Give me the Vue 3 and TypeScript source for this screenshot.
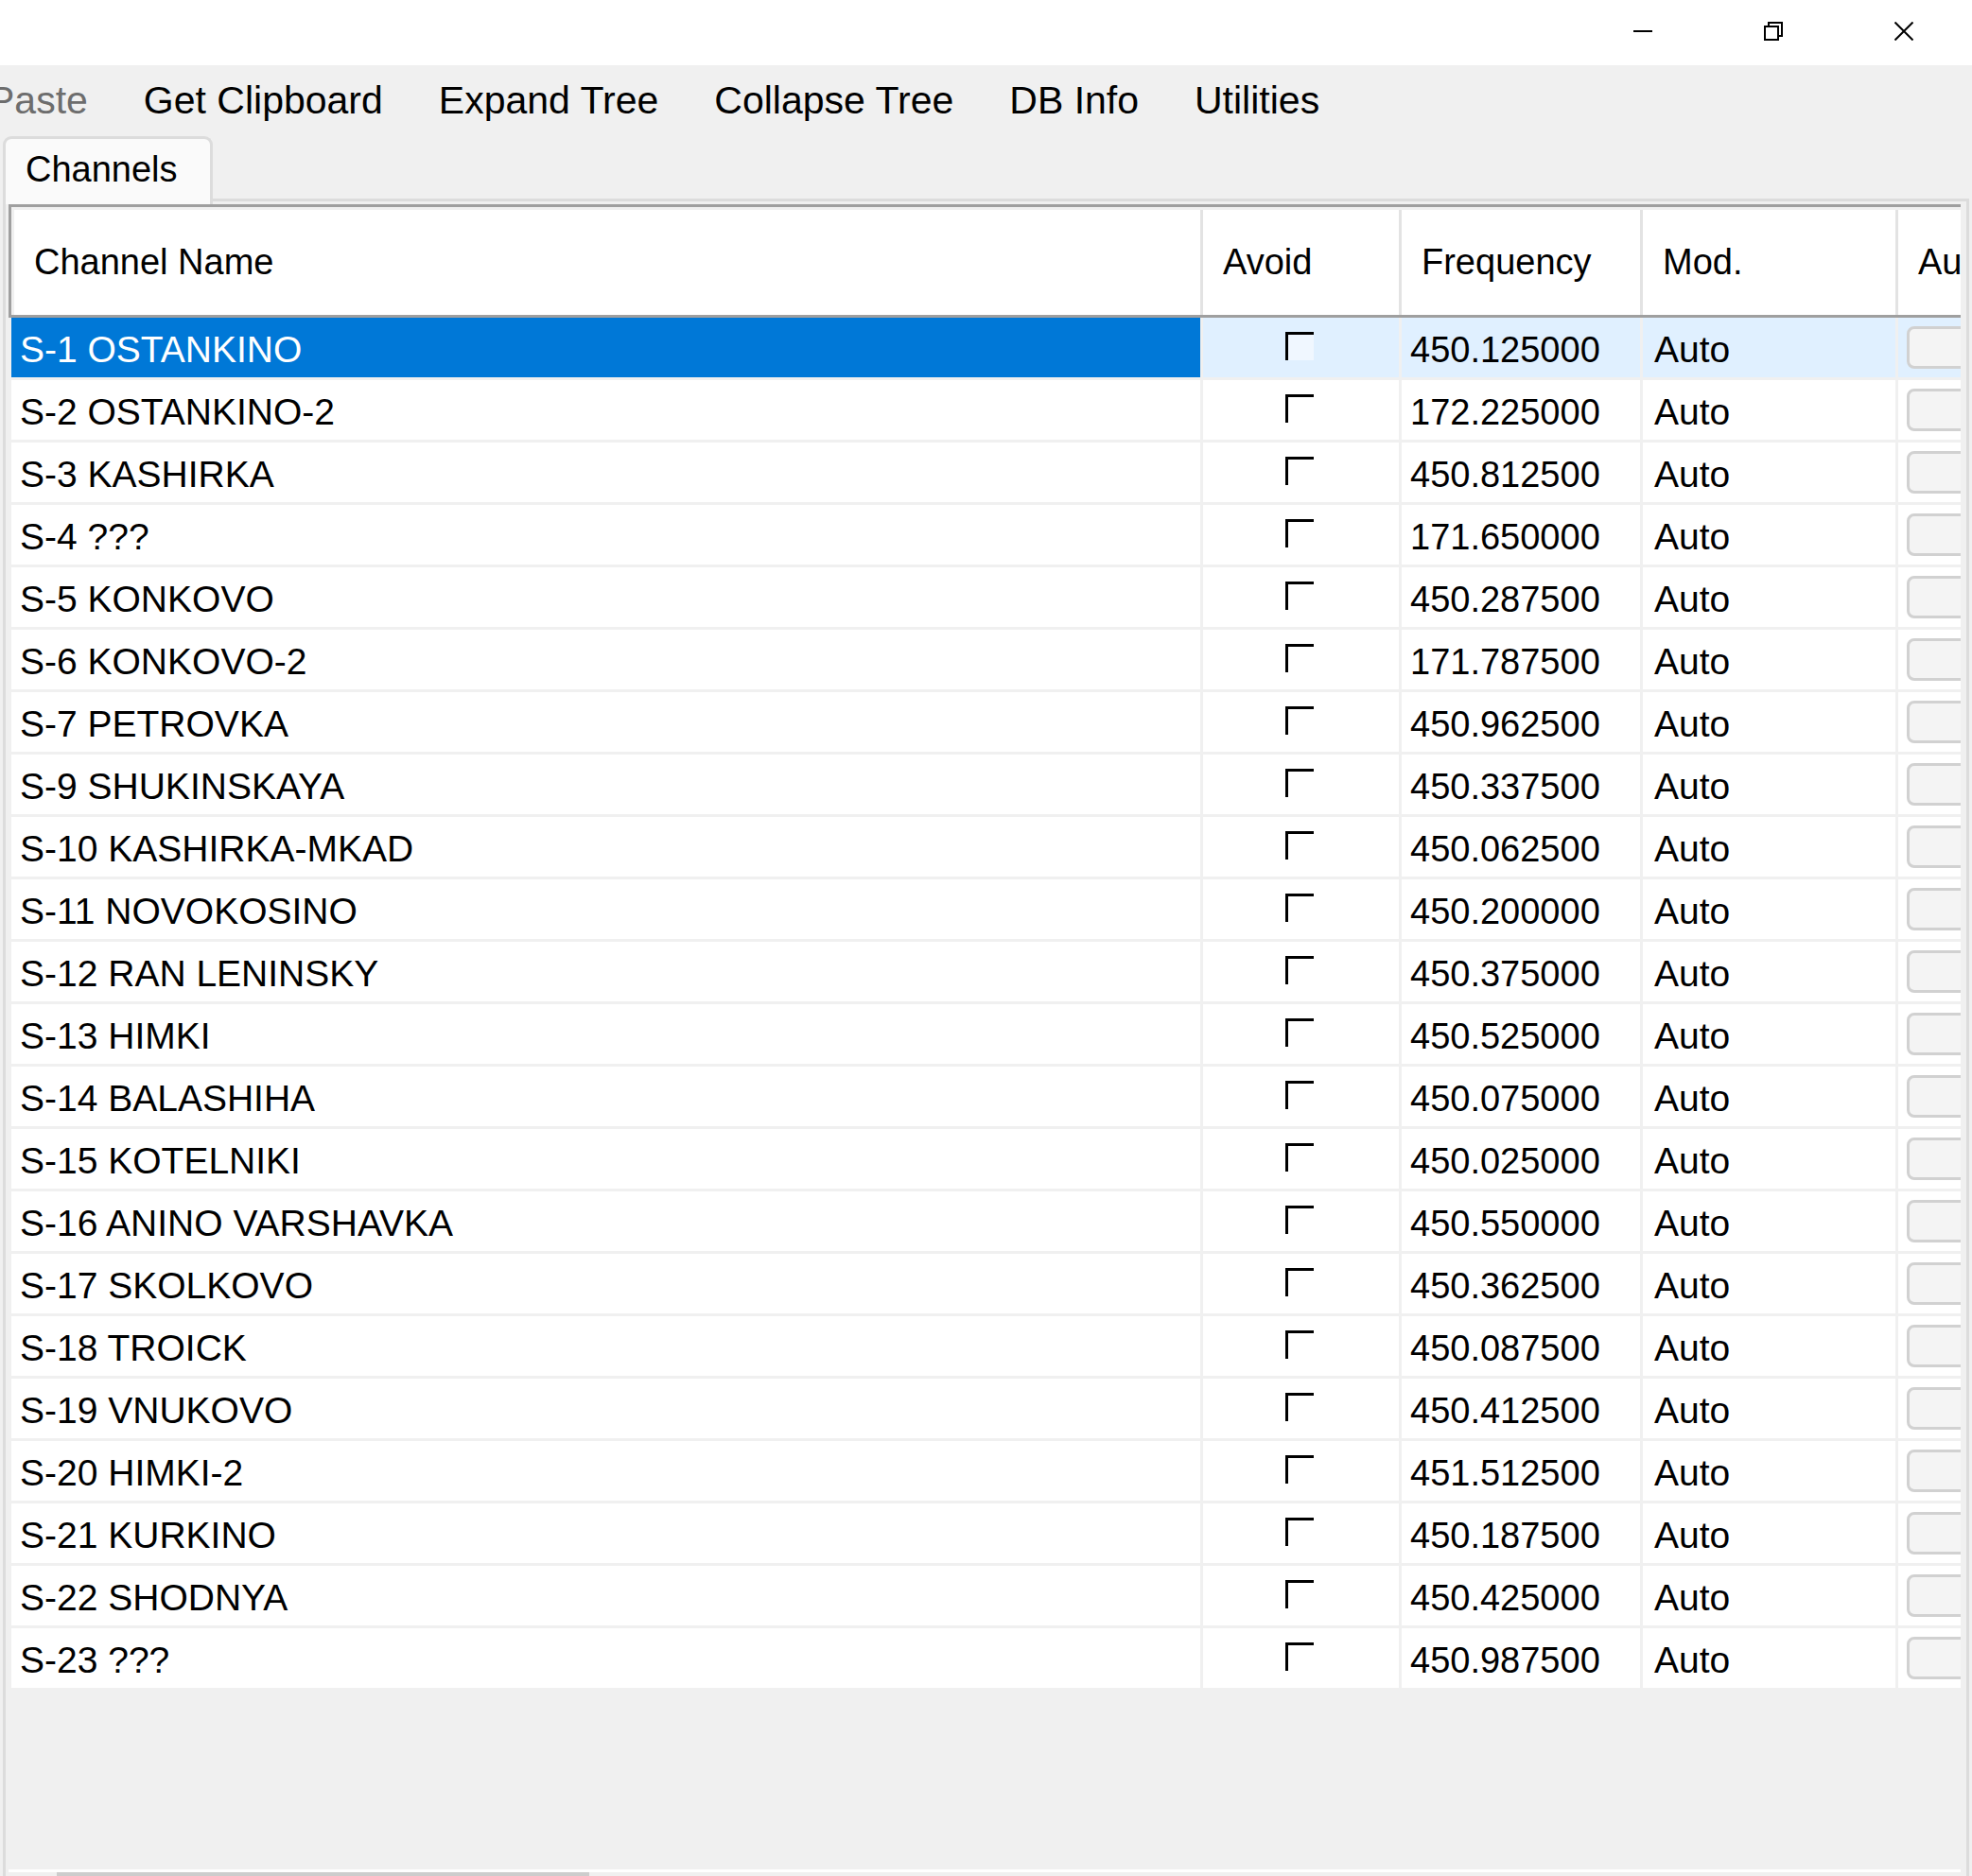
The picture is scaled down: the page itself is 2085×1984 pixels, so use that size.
<script setup lang="ts">
import { ref } from 'vue'

interface Channel {
  name: string
  frequency: string
  modulation: string
  avoid: boolean
}

const menuItems = [
  { label: 'Paste', disabled: true },
  { label: 'Get Clipboard', disabled: false },
  { label: 'Expand Tree', disabled: false },
  { label: 'Collapse Tree', disabled: false },
  { label: 'DB Info', disabled: false },
  { label: 'Utilities', disabled: false },
]

const rows: [string, string][] = [
  ['S-1 OSTANKINO', '450.125000'],
  ['S-2 OSTANKINO-2', '172.225000'],
  ['S-3 KASHIRKA', '450.812500'],
  ['S-4 ???', '171.650000'],
  ['S-5 KONKOVO', '450.287500'],
  ['S-6 KONKOVO-2', '171.787500'],
  ['S-7 PETROVKA', '450.962500'],
  ['S-9 SHUKINSKAYA', '450.337500'],
  ['S-10 KASHIRKA-MKAD', '450.062500'],
  ['S-11 NOVOKOSINO', '450.200000'],
  ['S-12 RAN LENINSKY', '450.375000'],
  ['S-13 HIMKI', '450.525000'],
  ['S-14 BALASHIHA', '450.075000'],
  ['S-15 KOTELNIKI', '450.025000'],
  ['S-16 ANINO VARSHAVKA', '450.550000'],
  ['S-17 SKOLKOVO', '450.362500'],
  ['S-18 TROICK', '450.087500'],
  ['S-19 VNUKOVO', '450.412500'],
  ['S-20 HIMKI-2', '451.512500'],
  ['S-21 KURKINO', '450.187500'],
  ['S-22 SHODNYA', '450.425000'],
  ['S-23 ???', '450.987500'],
]

const channels = ref<Channel[]>(
  rows.map(([name, frequency]) => ({ name, frequency, modulation: 'Auto', avoid: false })),
)
const selected = ref(0)
</script>

<template>
  <div class="window">
    <header class="titlebar">
      <button class="caption" type="button" aria-label="Minimize">
        <svg width="20" height="20" viewBox="0 0 20 20"><path d="M0 10H20" /></svg>
      </button>
      <button class="caption" type="button" aria-label="Restore">
        <svg width="20" height="20" viewBox="0 0 20 20">
          <path d="M1 5H15V19H1ZM5 5V1H19V15H15" />
        </svg>
      </button>
      <button class="caption" type="button" aria-label="Close">
        <svg width="20" height="20" viewBox="0 0 20 20"><path d="M.5 .5L19.5 19.5M19.5 .5L.5 19.5" /></svg>
      </button>
    </header>

    <nav class="menubar">
      <button
        v-for="item in menuItems"
        :key="item.label"
        class="menu-item"
        type="button"
        :disabled="item.disabled"
      >{{ item.label }}</button>
    </nav>

    <div class="tabs" role="tablist">
      <button class="tab" type="button" role="tab" aria-selected="true">Channels</button>
    </div>

    <main class="pane">
      <div class="grid">
        <table>
          <colgroup>
            <col />
            <col class="col-avoid" />
            <col class="col-frequency" />
            <col class="col-mod" />
            <col class="col-audio" />
          </colgroup>
          <thead>
            <tr>
              <th>Channel Name</th>
              <th>Avoid</th>
              <th>Frequency</th>
              <th>Mod.</th>
              <th>Au</th>
            </tr>
          </thead>
          <tbody>
            <tr
              v-for="(channel, index) in channels"
              :key="channel.name"
              :class="{ selected: index === selected }"
              @click="selected = index"
            >
              <td class="name">{{ channel.name }}</td>
              <td class="avoid">
                <input v-model="channel.avoid" type="checkbox" :aria-label="`Avoid ${channel.name}`" />
              </td>
              <td class="frequency">{{ channel.frequency }}</td>
              <td>{{ channel.modulation }}</td>
              <td class="audio">
                <button type="button" :aria-label="`Audio options for ${channel.name}`"></button>
              </td>
            </tr>
          </tbody>
        </table>
      </div>
      <div class="scrollbar"><div class="thumb"></div></div>
    </main>
  </div>
</template>

<style>
body {
  margin: 0;
  background: #f0f0f0;
}
</style>

<style scoped>
.window {
  display: flex;
  flex-direction: column;
  min-height: 100vh;
  overflow: hidden;
  background: #f0f0f0;
  color: #000;
  font-family: "Liberation Sans", Arial, sans-serif;
  font-size: 39px;
}

button {
  margin: 0;
  padding: 0;
  border: 0;
  background: none;
  color: inherit;
  font: inherit;
}

.titlebar {
  display: flex;
  justify-content: flex-end;
  height: 69px;
  padding-right: 3px;
  box-sizing: border-box;
  background: #fff;
}

.caption {
  display: flex;
  align-items: center;
  justify-content: center;
  width: 138px;
  height: 66px;
}

.caption svg {
  fill: none;
  stroke: #000;
  stroke-width: 2;
}

.menubar {
  display: flex;
  gap: 59px;
  height: 75px;
  margin-left: -12px;
}

.menu-item {
  height: 74px;
  font-size: 41px;
  white-space: nowrap;
}

.menu-item:disabled {
  color: #6d6d6d;
}

.tabs {
  display: flex;
  padding-left: 3px;
}

/* The active tab overlaps the top edge of the pane below it. */
.tab {
  position: relative;
  z-index: 1;
  height: 72px;
  margin-bottom: -6px;
  padding: 0 34px 5px 21px;
  border: 3px solid #dcdcdc;
  border-bottom: 0;
  border-radius: 9px 9px 0 0;
  background: #fafafa;
  font-size: 38px;
}

.pane {
  display: flex;
  flex: 1;
  flex-direction: column;
  margin: 0 3px;
  padding: 3px 6px 0 3px;
  border: 3px solid #dcdcdc;
  border-bottom: 0;
}

.grid {
  flex: 1;
  overflow: hidden;
  border-top: 3px solid #9f9f9f;
}

table {
  width: 100%;
  table-layout: fixed;
  border-spacing: 0;
}

.col-avoid {
  width: 210px;
}

.col-frequency {
  width: 255px;
}

.col-mod {
  width: 270px;
}

.col-audio {
  width: 66px;
}

th {
  height: 117px;
  box-sizing: border-box;
  padding: 0 0 0 21px;
  overflow: hidden;
  background: #fff;
  box-shadow: inset 0 -3px #9f9f9f, inset 0 3px #f0f0f0, inset -3px 0 #e3e3e3;
  font-size: 38px;
  font-weight: normal;
  text-align: left;
  white-space: nowrap;
}

th:first-child {
  padding-left: 27px;
  box-shadow: inset 0 -3px #9f9f9f, inset 3px 0 #9f9f9f, inset 0 3px #f0f0f0,
    inset 6px 0 #f0f0f0, inset -3px 0 #e3e3e3;
}

th:last-child {
  box-shadow: inset 0 -3px #9f9f9f, inset 0 3px #f0f0f0;
}

td {
  height: 66px;
  box-sizing: border-box;
  padding: 2px 0 0 12px;
  overflow: hidden;
  background: #fff;
  box-shadow: inset 0 -3px #f0f0f0, inset -3px 0 #f0f0f0;
  white-space: nowrap;
}

td.name {
  box-shadow: inset 0 -3px #f0f0f0, inset -3px 0 #f0f0f0, inset 3px 0 #f0f0f0;
}

td.avoid {
  padding: 0 6px 6px 0;
}

td.frequency {
  padding-left: 9px;
  font-size: 38px;
}

td.audio {
  padding: 0 0 3px 9px;
  box-shadow: inset 0 -3px #f0f0f0;
}

.selected td {
  background: #e0f0ff;
}

.selected td.name {
  background: #0078d7;
  color: #fff;
}

.avoid input {
  display: block;
  width: 30px;
  height: 30px;
  margin: 0 auto;
  appearance: none;
  border: solid #000;
  border-width: 3px 0 0 3px;
  background: #fff;
}

.avoid input:checked {
  background: #000;
}

.selected .avoid input {
  background: #f0f7ff;
}

.audio button {
  display: block;
  width: 90px;
  height: 45px;
  border: 3px solid #d1d1d1;
  border-radius: 8px;
  background: #f4f4f4;
}

.scrollbar {
  height: 4px;
  border-top: 3px solid #fff;
}

.thumb {
  width: 27.3%;
  height: 100%;
  margin-left: 51px;
  background: #cdcdcd;
}
</style>
